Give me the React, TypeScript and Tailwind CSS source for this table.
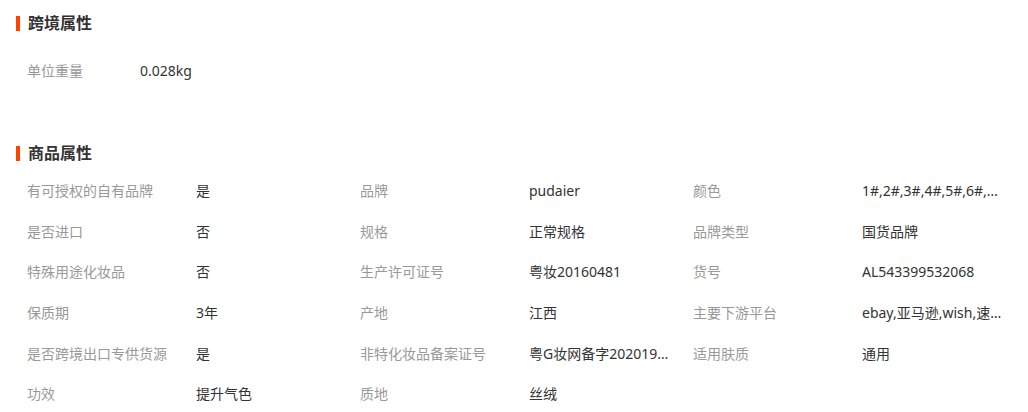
const font = "font-['Noto_Sans','Noto_Sans_CJK_SC',sans-serif]";

type Attr = { label: string; value: string };

const crossBorder: Attr[] = [{ label: "单位重量", value: "0.028kg" }];

const productAttrs: Attr[] = [
  { label: "有可授权的自有品牌", value: "是" },
  { label: "品牌", value: "pudaier" },
  { label: "颜色", value: "1#,2#,3#,4#,5#,6#,7#,8#" },
  { label: "是否进口", value: "否" },
  { label: "规格", value: "正常规格" },
  { label: "品牌类型", value: "国货品牌" },
  { label: "特殊用途化妆品", value: "否" },
  { label: "生产许可证号", value: "粤妆20160481" },
  { label: "货号", value: "AL543399532068" },
  { label: "保质期", value: "3年" },
  { label: "产地", value: "江西" },
  { label: "主要下游平台", value: "ebay,亚马逊,wish,速卖通" },
  { label: "是否跨境出口专供货源", value: "是" },
  { label: "非特化妆品备案证号", value: "粤G妆网备字2020190012" },
  { label: "适用肤质", value: "通用" },
  { label: "功效", value: "提升气色" },
  { label: "质地", value: "丝绒" },
];

function SectionTitle({ title }: { title: string }) {
  return (
    <div className="flex h-[30px] items-center pl-4">
      <span className="h-[15px] w-1 bg-[#ff4400]" />
      <h2 className="ml-2 text-base font-bold leading-none text-[#333]">{title}</h2>
    </div>
  );
}

function AttrCell({ label, value }: Attr) {
  return (
    <div className="flex h-[40.6px] items-center text-sm">
      <span className="w-[169px] shrink-0 text-[#999]">{label}</span>
      <span className="w-[140px] truncate text-[#333]">{value}</span>
    </div>
  );
}

export default function App() {
  return (
    <div className={`h-[412px] w-[1028px] overflow-hidden bg-white pt-2 ${font}`}>
      <SectionTitle title="跨境属性" />
      <div className="mt-[13px] pl-[27px]">
        {crossBorder.map(a => (
          <div key={a.label} className="flex h-10 items-center text-sm">
            <span className="w-[113px] shrink-0 text-[#999]">{a.label}</span>
            <span className="text-[#333]">{a.value}</span>
          </div>
        ))}
      </div>

      <div className="mt-[47px]">
        <SectionTitle title="商品属性" />
        <div className="mt-[3px] grid grid-cols-[333px_333px_1fr] pl-[27px]">
          {productAttrs.map(a => (
            <AttrCell key={a.label} {...a} />
          ))}
        </div>
      </div>
    </div>
  );
}
